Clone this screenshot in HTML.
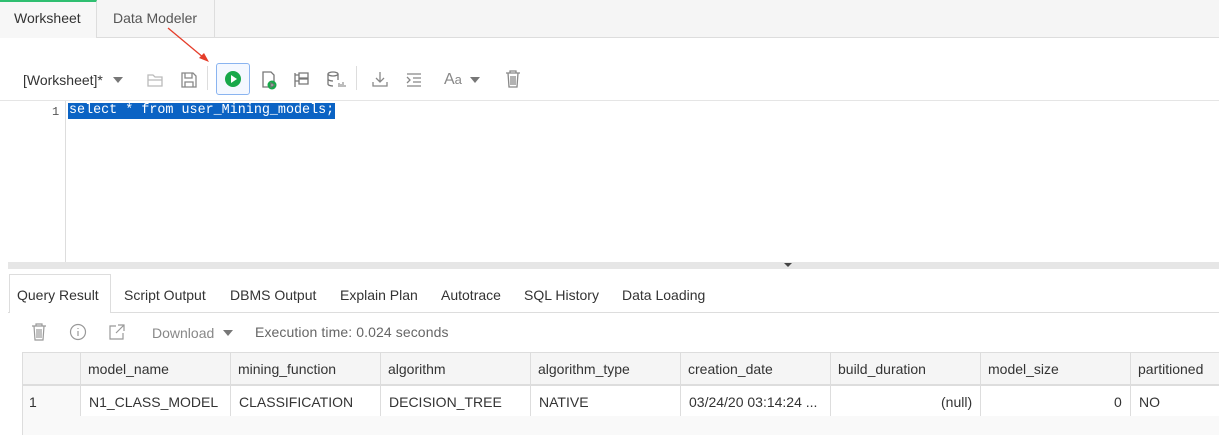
<!DOCTYPE html>
<html><head><style>
body{margin:0;width:1219px;height:434px;overflow:hidden;background:#fff;font-family:"Liberation Sans",sans-serif;font-size:14px;color:#333;position:relative}
.a{position:absolute}
.t{position:absolute;white-space:nowrap}
.tri{position:absolute;width:0;height:0;border-left:5px solid transparent;border-right:5px solid transparent;border-top:6px solid #777}
</style></head><body>
<div class="a" style="left:0;top:0;width:1219px;height:37px;background:#f5f5f5;border-bottom:1px solid #ddd"></div>
<div class="a" style="left:0;top:0;width:97px;height:38px;background:#f7f7f7;border-top:2px solid #2fbf71;border-right:1px solid #ddd;box-sizing:border-box"></div>
<div class="t" style="left:14px;top:10px;color:#333">Worksheet</div>
<div class="a" style="left:214px;top:0;width:1px;height:37px;background:#ddd"></div>
<div class="t" style="left:113px;top:10px;color:#555">Data Modeler</div>
<svg class="a" style="left:160px;top:20px" width="60" height="45"><line x1="8" y1="8" x2="44" y2="38" stroke="#e53d2a" stroke-width="1.3"/><polygon points="49,42 39,38 44,33" fill="#e53d2a"/></svg>
<div class="t" style="left:23px;top:72px;color:#333">[Worksheet]*</div>
<div class="tri" style="left:113px;top:77px"></div>
<svg class="a" style="left:146px;top:71px" width="20" height="18" fill="none" stroke="#bbb" stroke-width="1.3"><path d="M2 4h5l2 2h7v9H2z M2 9h14"/></svg>
<svg class="a" style="left:180px;top:71px" width="18" height="18" fill="none" stroke="#888" stroke-width="1.3"><path d="M2 2h11l3 3v11H2z M5 2v5h7V2 M5 16v-5h8v5"/></svg>
<div class="a" style="left:207px;top:66px;width:1px;height:24px;background:#ddd"></div>
<div class="a" style="left:216px;top:63px;width:34px;height:32px;border:1px solid #8ab4f0;border-radius:3px;box-sizing:border-box;background:#f4f8ff"></div>
<svg class="a" style="left:224px;top:70px" width="18" height="18"><circle cx="9" cy="9" r="8" fill="#18a84a"/><polygon points="7,5 13,9 7,13" fill="#fff"/></svg>
<svg class="a" style="left:260px;top:70px" width="18" height="20" fill="none" stroke="#777" stroke-width="1.3"><path d="M3 2h8l3 3v12H3z"/><circle cx="12" cy="15" r="4.5" fill="#18a84a" stroke="none"/><polygon points="11,13 14,15 11,17" fill="#fff"/></svg>
<svg class="a" style="left:293px;top:71px" width="18" height="18" fill="none" stroke="#777" stroke-width="1.3"><path d="M2 2v14 M2 4h4 M2 10h4 M6 2h9v5H6z M6 8h9v5H6z"/></svg>
<svg class="a" style="left:326px;top:70px" width="20" height="20" fill="none" stroke="#777" stroke-width="1.3"><ellipse cx="7" cy="4" rx="5" ry="2"/><path d="M2 4v10c0 1 2 2 5 2 M12 4v6 M2 9c0 1 2 2 5 2"/><path d="M13 17v-4 M15 17v-3 M17 17v-5 M19 17v-2" stroke="#999"/></svg>
<div class="a" style="left:356px;top:66px;width:1px;height:24px;background:#ddd"></div>
<svg class="a" style="left:371px;top:70px" width="18" height="18" fill="none" stroke="#888" stroke-width="1.3"><path d="M9 2v10 M5 8l4 4 4-4 M2 12v4h14v-4"/></svg>
<svg class="a" style="left:405px;top:71px" width="18" height="18" fill="none" stroke="#888" stroke-width="1.3"><path d="M2 3h14 M8 7h8 M8 11h8 M2 15h14 M2 6l3 3-3 3"/></svg>
<div class="t" style="left:444px;top:71px;color:#888;font-size:16px">A<span style="font-size:13px">a</span></div>
<div class="tri" style="left:470px;top:77px"></div>
<svg class="a" style="left:505px;top:70px" width="16" height="18" fill="none" stroke="#888" stroke-width="1.3"><path d="M1 3h14 M5 3V1h6v2 M3 3l1 14h8l1-14 M6 6v9 M8 6v9 M10 6v9"/></svg>
<div class="a" style="left:0;top:100px;width:1219px;height:1px;background:#e5e5e5"></div>
<div class="a" style="left:65px;top:101px;width:1px;height:161px;background:#ddd"></div>
<div class="t" style="left:52px;top:105px;font-family:'Liberation Mono',monospace;font-size:12px;color:#555">1</div>
<div class="t" style="left:68px;top:103px;height:16px;background:#0b63c4;color:#fff;font-family:'Liberation Mono',monospace;font-size:13.4px;line-height:16px;padding:0 1px">select * from user_Mining_models;</div>
<div class="a" style="left:8px;top:262px;width:1211px;height:7px;background:#e6e6e6"></div>
<div class="a" style="left:784px;top:263px;width:0;height:0;border-left:4px solid transparent;border-right:4px solid transparent;border-top:4px solid #444"></div>
<div class="a" style="left:8px;top:312px;width:1211px;height:1px;background:#ddd"></div>
<div class="a" style="left:9px;top:274px;width:102px;height:39px;border:1px solid #ddd;border-bottom:none;background:#fff;box-sizing:border-box"></div>
<div class="t" style="left:17px;top:287px">Query Result</div>
<div class="t" style="left:124px;top:287px">Script Output</div>
<div class="t" style="left:230px;top:287px">DBMS Output</div>
<div class="t" style="left:340px;top:287px">Explain Plan</div>
<div class="t" style="left:441px;top:287px">Autotrace</div>
<div class="t" style="left:524px;top:287px">SQL History</div>
<div class="t" style="left:622px;top:287px">Data Loading</div>
<svg class="a" style="left:31px;top:323px" width="16" height="18" fill="none" stroke="#999" stroke-width="1.2"><path d="M1 3h14 M5 3V1h6v2 M3 3l1 14h8l1-14 M6 6v9 M8 6v9 M10 6v9"/></svg>
<svg class="a" style="left:69px;top:323px" width="18" height="18" fill="none" stroke="#999" stroke-width="1.2"><circle cx="9" cy="9" r="7.5"/><path d="M9 8v5 M9 5v1"/></svg>
<svg class="a" style="left:108px;top:323px" width="18" height="18" fill="none" stroke="#999" stroke-width="1.2"><path d="M8 3H2v13h13v-6 M10 2h6v6 M16 2L8 10"/></svg>
<div class="t" style="left:152px;top:325px;color:#888">Download</div>
<div class="tri" style="left:223px;top:330px"></div>
<div class="t" style="left:255px;top:324px;color:#666;letter-spacing:0.1px">Execution time: 0.024 seconds</div>
<div class="a" style="left:22px;top:352px;width:1197px;height:82px;background:#f9f9f9;border-left:1px solid #ddd;border-top:1px solid #ddd"></div>
<div class="a" style="left:23px;top:353px;width:1196px;height:31px;background:#f5f5f5;border-bottom:2px solid #ddd"></div>
<div class="a" style="left:80px;top:386px;width:1139px;height:30px;background:#fff"></div>
<div class="a" style="left:80px;top:353px;width:1px;height:63px;background:#ddd"></div>
<div class="a" style="left:230px;top:353px;width:1px;height:63px;background:#ddd"></div>
<div class="a" style="left:380px;top:353px;width:1px;height:63px;background:#ddd"></div>
<div class="a" style="left:530px;top:353px;width:1px;height:63px;background:#ddd"></div>
<div class="a" style="left:680px;top:353px;width:1px;height:63px;background:#ddd"></div>
<div class="a" style="left:830px;top:353px;width:1px;height:63px;background:#ddd"></div>
<div class="a" style="left:980px;top:353px;width:1px;height:63px;background:#ddd"></div>
<div class="a" style="left:1130px;top:353px;width:1px;height:63px;background:#ddd"></div>
<div class="t" style="left:88px;top:361px">model_name</div>
<div class="t" style="left:238px;top:361px">mining_function</div>
<div class="t" style="left:388px;top:361px">algorithm</div>
<div class="t" style="left:538px;top:361px">algorithm_type</div>
<div class="t" style="left:688px;top:361px">creation_date</div>
<div class="t" style="left:838px;top:361px">build_duration</div>
<div class="t" style="left:988px;top:361px">model_size</div>
<div class="t" style="left:1138px;top:361px">partitioned</div>
<div class="t" style="left:29px;top:394px">1</div>
<div class="t" style="left:89px;top:394px">N1_CLASS_MODEL</div>
<div class="t" style="left:239px;top:394px">CLASSIFICATION</div>
<div class="t" style="left:389px;top:394px">DECISION_TREE</div>
<div class="t" style="left:539px;top:394px">NATIVE</div>
<div class="t" style="left:689px;top:394px">03/24/20 03:14:24 ...</div>
<div class="t" style="left:941px;top:394px">(null)</div>
<div class="t" style="left:1114px;top:394px">0</div>
<div class="t" style="left:1139px;top:394px">NO</div>
</body></html>
